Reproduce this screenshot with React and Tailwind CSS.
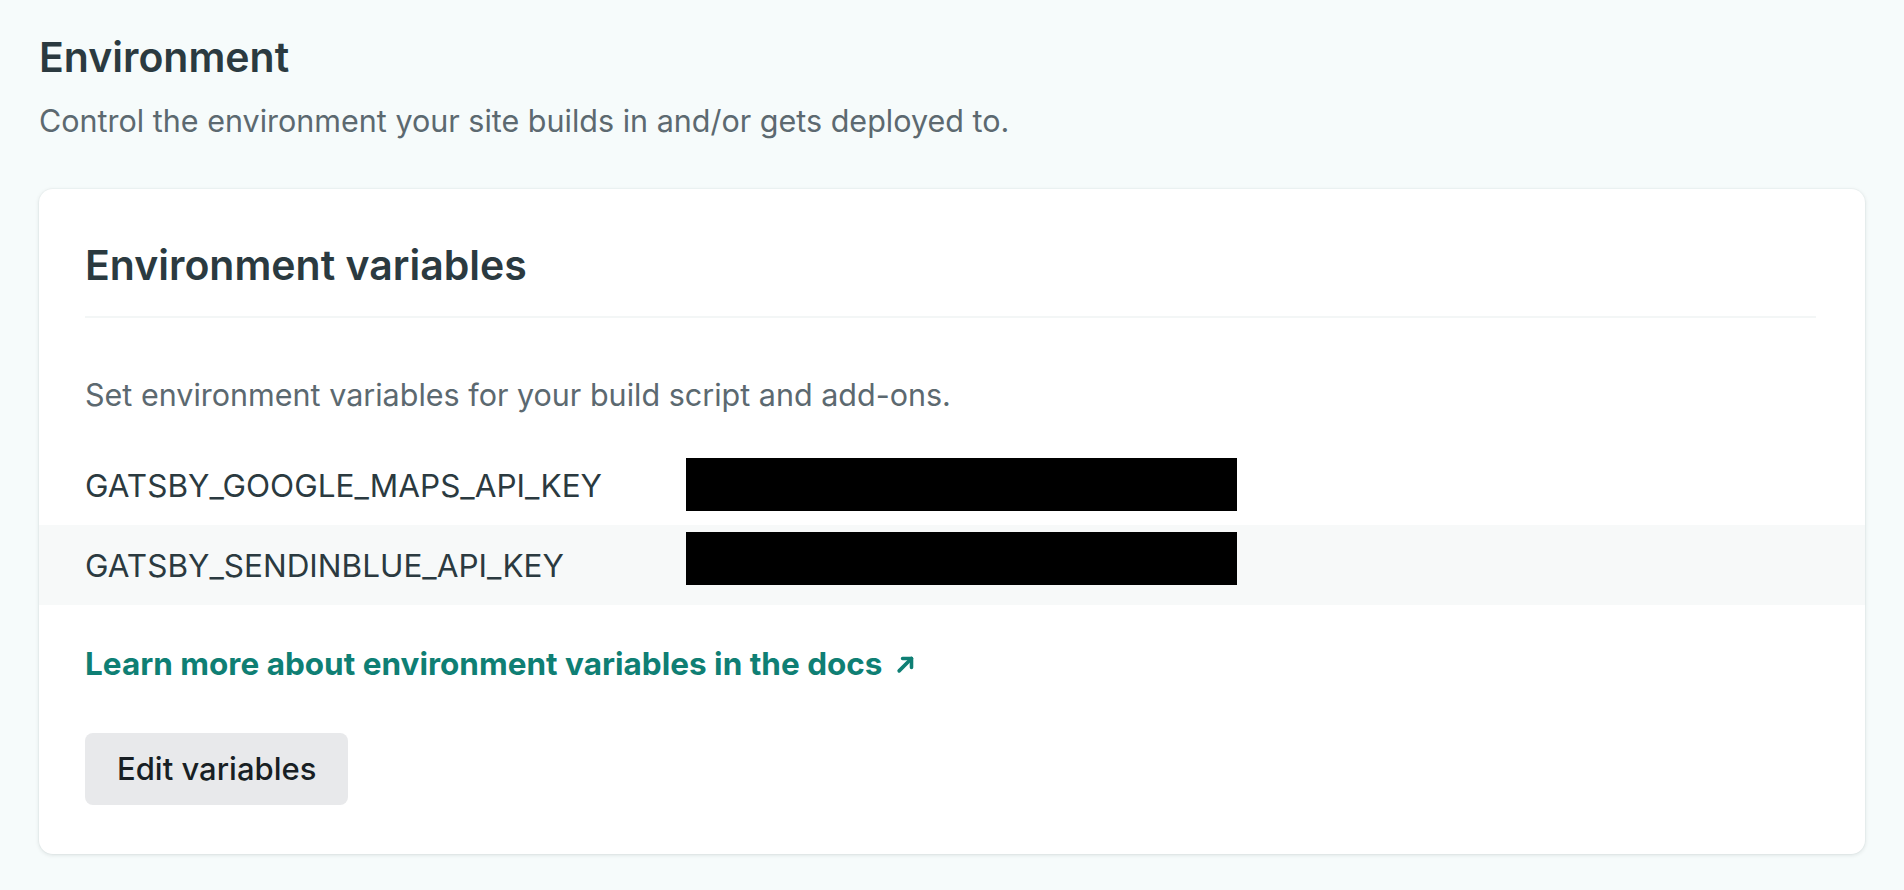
import React from 'react';

const variables = [
  { key: 'GATSBY_GOOGLE_MAPS_API_KEY', offset: 'mt-[13px]', shaded: false },
  { key: 'GATSBY_SENDINBLUE_API_KEY', offset: 'mt-[7px]', shaded: true },
];

const App = () => {
  return (
    <div className="min-h-screen w-full bg-[#f6fbfb] px-[39px] pt-[33px] pb-[36px] font-['Inter','Liberation_Sans',sans-serif]">
      <h1 className="text-[41px] leading-[48px] font-semibold text-[#2b3a40]">Environment</h1>
      <p className="mt-[20px] text-[30.5px] leading-[40px] text-[#5c6970]">
        Control the environment your site builds in and/or gets deployed to.
      </p>

      <div className="mt-[48px] rounded-[14px] bg-white pt-[52px] pb-[49px] shadow-[0_1px_4px_rgba(14,30,37,0.12),0_0_0_1px_rgba(14,30,37,0.02)]">
        <div className="pl-[46px] pr-[49px]">
          <h2 className="pb-[27px] border-b-2 border-[#f3f6f6] text-[41px] leading-[48px] font-semibold text-[#2b3a40]">
            Environment variables
          </h2>
          <p className="mt-[57px] text-[30.5px] leading-[40px] text-[#5c6970]">
            Set environment variables for your build script and add-ons.
          </p>
        </div>

        <div className="mt-[30px]">
          {variables.map((v) => (
            <div
              key={v.key}
              className={`flex h-[80px] items-start px-[46px] ${v.shaded ? 'bg-[#f7f9f9]' : ''}`}
            >
              <div className="w-[601px] pt-[21px] text-[31.5px] leading-[40px] text-[#2b3a40]">{v.key}</div>
              <div className={`h-[53px] w-[551px] bg-black ${v.offset}`} />
            </div>
          ))}
        </div>

        <div className="px-[46px]">
          <a href="#" className="mt-[39px] flex items-center gap-[12px] text-[31.5px] leading-[40px] font-bold text-[#0f7f74]">
            Learn more about environment variables in the docs
            <svg width="22" height="22" viewBox="0 0 16 16" fill="none" stroke="currentColor" strokeWidth="2.6" strokeLinecap="round" strokeLinejoin="round">
              <path d="M3 13 L12 4" />
              <path d="M5.5 4 H12 V10.5" />
            </svg>
          </a>

          <button className="mt-[49px] h-[72px] rounded-[8px] bg-[#e8e9eb] px-[32px] text-[31px] font-medium text-[#181f24]">
            Edit variables
          </button>
        </div>
      </div>
    </div>
  );
};

export default App;
